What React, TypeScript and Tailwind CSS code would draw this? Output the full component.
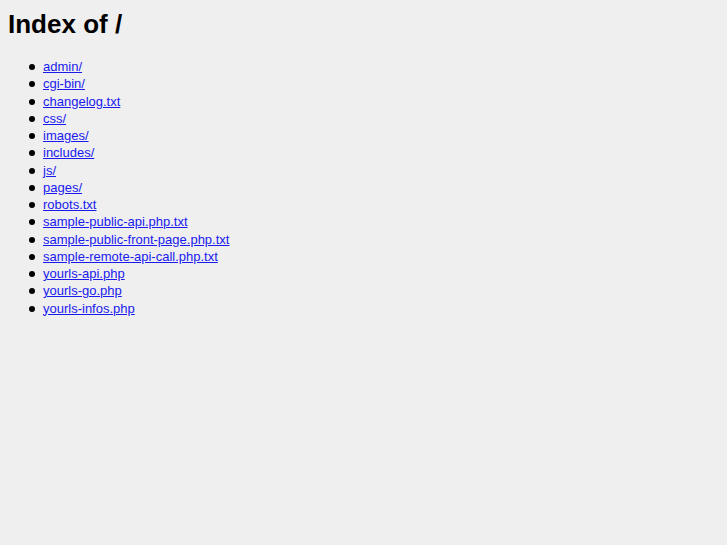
const entries = [
  "admin/",
  "cgi-bin/",
  "changelog.txt",
  "css/",
  "images/",
  "includes/",
  "js/",
  "pages/",
  "robots.txt",
  "sample-public-api.php.txt",
  "sample-public-front-page.php.txt",
  "sample-remote-api-call.php.txt",
  "yourls-api.php",
  "yourls-go.php",
  "yourls-infos.php",
]

function App() {
  return (
    <div className="min-h-[545px] bg-[#efefef] px-[8px] pt-[9px] font-['Liberation_Sans',Arial,sans-serif] text-black">
      <h1 className="text-[26px] font-bold leading-[30px]">Index of /</h1>
      <ul className="mt-[19px] pl-[21px] text-[13px] leading-[17.25px]">
        {entries.map((name) => (
          <li key={name} className="flex items-center">
            <span className="mr-[8px] mt-[1px] h-[6px] w-[6px] shrink-0 rounded-full bg-black" />
            <a href="#" className="text-[#1a1aee] underline">
              {name}
            </a>
          </li>
        ))}
      </ul>
    </div>
  )
}

export default App
